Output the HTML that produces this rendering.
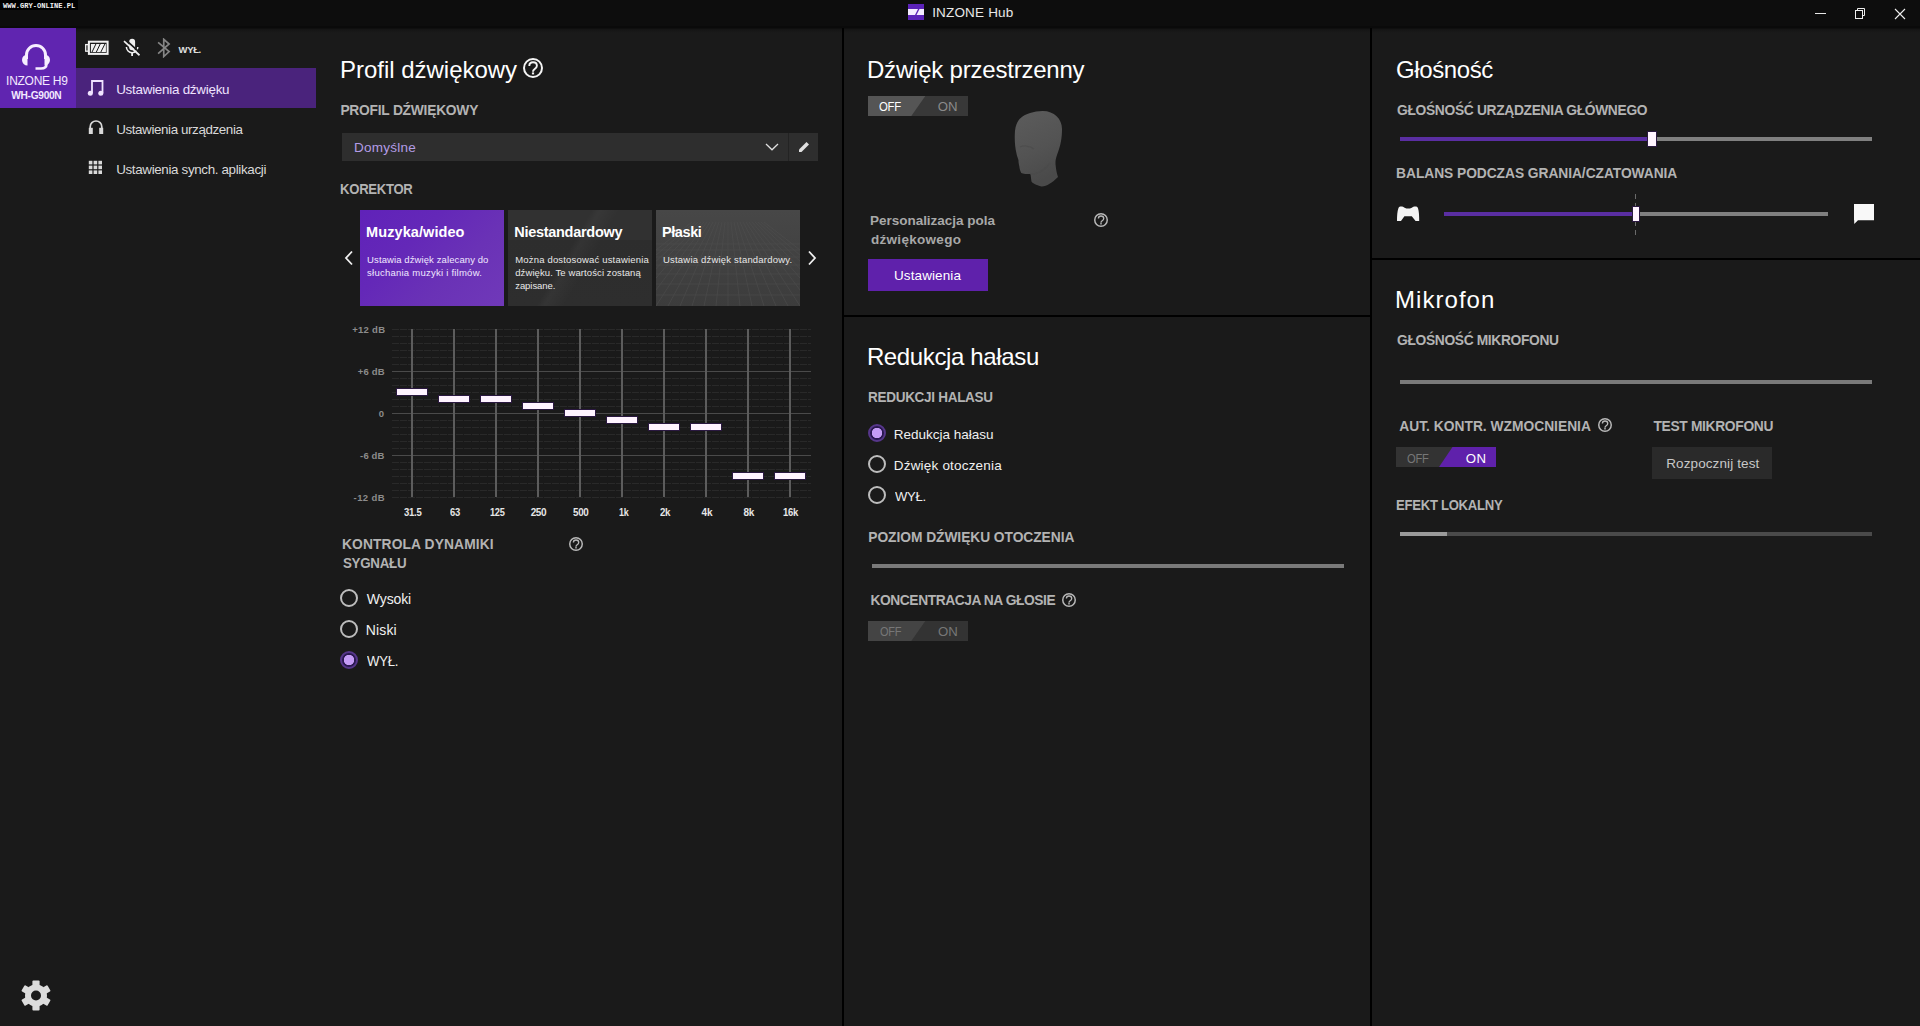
<!DOCTYPE html>
<html><head><meta charset="utf-8"><title>INZONE Hub</title>
<style>
*{box-sizing:border-box;margin:0;padding:0}
html,body{width:1920px;height:1026px;overflow:hidden;background:#1a1a1a;font-family:"Liberation Sans",sans-serif}
.a{position:absolute}
.t{position:absolute;line-height:1;white-space:nowrap}

.sep{position:absolute;background:#000}
.help{position:absolute;border-radius:50%;border:1.5px solid #ddd}
.radio{position:absolute;width:18px;height:18px;border-radius:50%;border:2px solid #bdbdbd}
.radio.on{border:2px solid #56368a;background:radial-gradient(circle at 50% 50%,#c59cf6 0,#c59cf6 4.9px,#2a1850 5.5px)}
.tog{position:absolute;width:100px;height:20px;overflow:hidden}
.grid-h{position:absolute;left:392px;width:419px;height:1px}
.dot{background:repeating-linear-gradient(90deg,#292929 0 7px,transparent 7px 8px)}
.sol{background:#4a4a4a}
.vs{position:absolute;width:2px;top:329px;height:168px;background:#5c5c5c}
.th{position:absolute;width:30px;height:6px;background:#fff4ff;box-shadow:0 0 0 1px #2a1840}

</style></head><body>
<div class="a" style="left:0;top:0;width:1920px;height:28px;background:#0d0d0d"></div>
<div class="a" style="left:0;top:26px;width:1920px;height:7px;background:linear-gradient(180deg,#0a0a0a 0,#0a0a0a 2px,#141414 3px,#1a1a1a 7px)"></div>
<div class="a" style="left:0;top:0;width:78px;height:10px;background:#000"></div>
<div class="t" style="left:3px;top:3px;font-family:'Liberation Mono',monospace;font-size:7.1px;font-weight:700;color:#f0f0f0">WWW.GRY-ONLINE.PL</div>
<svg class="a" style="left:908px;top:4px" width="16" height="16" viewBox="0 0 16 16"><rect x="0" y="0" width="16" height="16" fill="#5b22b8"/><rect x="0" y="5" width="16" height="6" fill="#f4ecff"/><path d="M7 11 L10 5 L11.5 5 L8.5 11Z" fill="#5b22b8"/></svg>
<div class="a" style="left:1815px;top:13px;width:11px;height:1px;background:#e8e8e8"></div>
<svg class="a" style="left:1854px;top:8px" width="12" height="12" viewBox="0 0 12 12"><path d="M3.5 2.5 V0.5 H10.5 V7.5 H8.5" fill="none" stroke="#eee" stroke-width="1"/><rect x="1.5" y="2.5" width="7" height="8" fill="none" stroke="#eee" stroke-width="1"/></svg>
<svg class="a" style="left:1894px;top:8px" width="12" height="12" viewBox="0 0 12 12"><path d="M1 1 L11 11 M11 1 L1 11" stroke="#eee" stroke-width="1.1"/></svg>
<div class="sep" style="left:842px;top:28px;width:2px;height:998px"></div>
<div class="sep" style="left:1370px;top:28px;width:2px;height:998px"></div>
<div class="sep" style="left:844px;top:315px;width:526px;height:2px"></div>
<div class="sep" style="left:1372px;top:258px;width:548px;height:2px"></div>
<div class="a" style="left:0;top:28px;width:76px;height:80px;background:#6025b0"></div>
<svg class="a" style="left:21px;top:43px" width="30" height="28" viewBox="0 0 30 28"><path d="M5.5 16 V12 A9.5 9.5 0 0 1 24.5 12 V16" fill="none" stroke="#f6eeff" stroke-width="3"/><path d="M6.5 11.5 A5.5 5.5 0 0 0 6.5 22.5 Z" fill="#f6eeff"/><path d="M23.5 11.5 A5.5 5.5 0 0 1 23.5 22.5 Z" fill="#f6eeff"/><path d="M25.5 21 Q25.5 25.5 20 25.5 H14.5" fill="none" stroke="#f6eeff" stroke-width="2.6"/></svg>
<div class="a" style="left:76px;top:68px;width:240px;height:40px;background:#4a237c"></div>
<svg class="a" style="left:84px;top:38px" width="26" height="20" viewBox="0 0 26 20"><rect x="4.9" y="3.7" width="18.7" height="12.2" fill="none" stroke="#f2f2f2" stroke-width="2"/><rect x="1.7" y="6.6" width="2.6" height="6.6" fill="none" stroke="#f2f2f2" stroke-width="1.3"/><rect x="6.9" y="6" width="15" height="8.1" fill="#f2f2f2"/><path d="M8 14.1 L11.9 6 M12.3 14.1 L16.2 6 M16.8 14.1 L20.9 6" stroke="#1a1a1a" stroke-width="1"/></svg>
<svg class="a" style="left:122px;top:36px" width="20" height="22" viewBox="0 0 20 22"><rect x="7.2" y="2.7" width="5.9" height="11.5" rx="2.95" fill="#f0f0f0"/><path d="M4.4 11 A5.7 5.7 0 0 0 15.8 11" fill="none" stroke="#f0f0f0" stroke-width="1.5"/><path d="M10.1 16.5 V20" stroke="#f0f0f0" stroke-width="1.8"/><path d="M3.4 3.6 L18.9 17.6" stroke="#1a1a1a" stroke-width="1.8"/><path d="M2 5.2 L17.5 19.25" stroke="#f0f0f0" stroke-width="1.7"/></svg>
<svg class="a" style="left:157px;top:38px" width="14" height="20" viewBox="0 0 14 20"><path d="M1.1 4.4 L12.1 13.5 L6.75 18.5 V1.3 L12.1 6 L1.1 15.7" fill="none" stroke="#858585" stroke-width="1.7"/></svg>
<svg class="a" style="left:87px;top:79px" width="18" height="18" viewBox="0 0 18 18"><path d="M5 14 V2 H15.5 V14" fill="none" stroke="#f0e4ff" stroke-width="1.8"/><circle cx="3.3" cy="14.2" r="2.5" fill="#f0e4ff"/><circle cx="13.8" cy="14.2" r="2.5" fill="#f0e4ff"/></svg>
<svg class="a" style="left:88px;top:119px" width="16" height="16" viewBox="0 0 16 16"><path d="M2.2 12 V7.8 A5.8 5.8 0 0 1 13.8 7.8 V12" fill="none" stroke="#d9d9d9" stroke-width="1.7"/><rect x="0.8" y="8.8" width="4" height="6.2" fill="#d9d9d9"/><rect x="11.2" y="8.8" width="4" height="6.2" fill="#d9d9d9"/></svg>
<svg class="a" style="left:88px;top:160px" width="15" height="15" viewBox="0 0 15 15"><rect x="0.8" y="0.8" width="3.6" height="3.6" fill="#d9d9d9"/><rect x="0.8" y="5.6" width="3.6" height="3.6" fill="#d9d9d9"/><rect x="0.8" y="10.4" width="3.6" height="3.6" fill="#d9d9d9"/><rect x="5.6" y="0.8" width="3.6" height="3.6" fill="#d9d9d9"/><rect x="5.6" y="5.6" width="3.6" height="3.6" fill="#d9d9d9"/><rect x="5.6" y="10.4" width="3.6" height="3.6" fill="#d9d9d9"/><rect x="10.4" y="0.8" width="3.6" height="3.6" fill="#d9d9d9"/><rect x="10.4" y="5.6" width="3.6" height="3.6" fill="#d9d9d9"/><rect x="10.4" y="10.4" width="3.6" height="3.6" fill="#d9d9d9"/></svg>
<svg class="a" style="left:523px;top:58px" width="20" height="20" viewBox="0 0 20 20"><circle cx="10.0" cy="10.0" r="9.0" fill="none" stroke="#f4f4f4" stroke-width="2.0"/><path d="M6.30 8.00 C6.30 5.40 8.10 4.30 10.00 4.30 C12.20 4.30 13.90 5.70 13.90 7.70 C13.90 9.70 12.30 10.60 11.20 11.50 C10.30 12.20 10.00 12.80 10.00 13.80" fill="none" stroke="#f4f4f4" stroke-width="1.90"/><rect x="8.90" y="14.40" width="2.20" height="2.00" fill="#f4f4f4"/></svg>
<div class="a" style="left:342px;top:133px;width:476px;height:28px;background:#2e2e2e"></div>
<div class="a" style="left:788px;top:133px;width:1px;height:28px;background:#232323"></div>
<svg class="a" style="left:764px;top:141px" width="16" height="11" viewBox="0 0 16 11"><path d="M2 3 L8 8.8 L14 3" fill="none" stroke="#e0e0e0" stroke-width="1.3"/></svg>
<svg class="a" style="left:797px;top:140px" width="14" height="14" viewBox="0 0 14 14"><path d="M2 9.5 L9.5 2 L12 4.5 L4.5 12 H2Z" fill="#e0e0e0"/></svg>
<div class="a" style="left:360px;top:210px;width:144px;height:96px;background:linear-gradient(135deg,#6022b9 0%,#6428b8 35%,#6a32b6 65%,#7039b9 100%)"></div>
<div class="a" style="left:508px;top:210px;width:144px;height:96px;background:linear-gradient(180deg,#313131 0,#313131 31%,#2d2d2d 31%,#2e2e2e 100%)"></div>
<div class="a" style="left:508px;top:210px;width:144px;height:96px;background:linear-gradient(120deg,transparent 0%,transparent 42%,rgba(255,255,255,0.03) 46%,transparent 56%)"></div>
<svg class="a" style="left:656px;top:210px" width="144" height="96" viewBox="0 0 144 96"><defs><linearGradient id="c3" x1="0" y1="0" x2="0" y2="1"><stop offset="0" stop-color="#474747"/><stop offset="1" stop-color="#3c3c3c"/></linearGradient></defs><rect width="144" height="96" fill="url(#c3)"/><g stroke="#515151" stroke-width="0.9" opacity="0.55"><path d="M36 12 L-72 96"/><path d="M39 12 L-60 96"/><path d="M42 12 L-48 96"/><path d="M45 12 L-36 96"/><path d="M48 12 L-24 96"/><path d="M51 12 L-12 96"/><path d="M54 12 L0 96"/><path d="M57 12 L12 96"/><path d="M60 12 L24 96"/><path d="M63 12 L36 96"/><path d="M66 12 L48 96"/><path d="M69 12 L60 96"/><path d="M72 12 L72 96"/><path d="M75 12 L84 96"/><path d="M78 12 L96 96"/><path d="M81 12 L108 96"/><path d="M84 12 L120 96"/><path d="M87 12 L132 96"/><path d="M90 12 L144 96"/><path d="M93 12 L156 96"/><path d="M96 12 L168 96"/><path d="M99 12 L180 96"/><path d="M102 12 L192 96"/><path d="M105 12 L204 96"/><path d="M108 12 L216 96"/><path d="M0 34 H144"/><path d="M0 40 H144"/><path d="M0 47 H144"/><path d="M0 55 H144"/><path d="M0 64 H144"/><path d="M0 74 H144"/><path d="M0 85 H144"/></g></svg>
<svg class="a" style="left:343px;top:250px" width="12" height="16" viewBox="0 0 12 16"><path d="M9 1.5 L3 8 L9 14.5" fill="none" stroke="#f0f0f0" stroke-width="1.8"/></svg>
<svg class="a" style="left:806px;top:250px" width="12" height="16" viewBox="0 0 12 16"><path d="M3 1.5 L9 8 L3 14.5" fill="none" stroke="#f0f0f0" stroke-width="1.8"/></svg>
<div class="grid-h dot" style="top:329px"></div>
<div class="grid-h dot" style="top:336px"></div>
<div class="grid-h dot" style="top:343px"></div>
<div class="grid-h dot" style="top:350px"></div>
<div class="grid-h dot" style="top:357px"></div>
<div class="grid-h dot" style="top:364px"></div>
<div class="grid-h sol" style="top:371px"></div>
<div class="grid-h dot" style="top:378px"></div>
<div class="grid-h dot" style="top:385px"></div>
<div class="grid-h dot" style="top:392px"></div>
<div class="grid-h dot" style="top:399px"></div>
<div class="grid-h dot" style="top:406px"></div>
<div class="grid-h sol" style="top:413px"></div>
<div class="grid-h dot" style="top:420px"></div>
<div class="grid-h dot" style="top:427px"></div>
<div class="grid-h dot" style="top:434px"></div>
<div class="grid-h dot" style="top:441px"></div>
<div class="grid-h dot" style="top:448px"></div>
<div class="grid-h sol" style="top:455px"></div>
<div class="grid-h dot" style="top:462px"></div>
<div class="grid-h dot" style="top:469px"></div>
<div class="grid-h dot" style="top:476px"></div>
<div class="grid-h dot" style="top:483px"></div>
<div class="grid-h dot" style="top:490px"></div>
<div class="grid-h dot" style="top:497px"></div>
<div class="vs" style="left:411px"></div>
<div class="vs" style="left:453px"></div>
<div class="vs" style="left:495px"></div>
<div class="vs" style="left:537px"></div>
<div class="vs" style="left:579px"></div>
<div class="vs" style="left:621px"></div>
<div class="vs" style="left:663px"></div>
<div class="vs" style="left:705px"></div>
<div class="vs" style="left:747px"></div>
<div class="vs" style="left:789px"></div>
<div class="th" style="left:397px;top:389px"></div>
<div class="th" style="left:439px;top:396px"></div>
<div class="th" style="left:481px;top:396px"></div>
<div class="th" style="left:523px;top:403px"></div>
<div class="th" style="left:565px;top:410px"></div>
<div class="th" style="left:607px;top:417px"></div>
<div class="th" style="left:649px;top:424px"></div>
<div class="th" style="left:691px;top:424px"></div>
<div class="th" style="left:733px;top:473px"></div>
<div class="th" style="left:775px;top:473px"></div>
<svg class="a" style="left:569px;top:537px" width="14" height="14" viewBox="0 0 14 14"><circle cx="7.0" cy="7.0" r="6.25" fill="none" stroke="#b8b8b8" stroke-width="1.5"/><path d="M4.41 5.60 C4.41 3.78 5.67 3.01 7.00 3.01 C8.54 3.01 9.73 3.99 9.73 5.39 C9.73 6.79 8.61 7.42 7.84 8.05 C7.21 8.54 7.00 8.96 7.00 9.66" fill="none" stroke="#b8b8b8" stroke-width="1.33"/><rect x="6.23" y="10.08" width="1.54" height="1.40" fill="#b8b8b8"/></svg>
<div class="radio" style="left:340px;top:589px"></div>
<div class="radio" style="left:340px;top:620px"></div>
<div class="radio on" style="left:340px;top:651px"></div>
<svg class="a" style="left:868px;top:96px" width="100" height="20" viewBox="0 0 100 20"><rect width="100" height="20" fill="#383838"/><path d="M0 0 H57.3 L43.3 20 H0Z" fill="#555555"/></svg>
<svg class="a" style="left:1010px;top:105px" width="56" height="86" viewBox="0 0 56 86"><defs><linearGradient id="hg" x1="0" y1="0" x2="0.3" y2="1"><stop offset="0" stop-color="#5c5c5c"/><stop offset="0.6" stop-color="#535353"/><stop offset="1" stop-color="#4a4a4a"/></linearGradient></defs><path d="M32.6 6.1 C44 6 52 14 52 24 C52 32 51 40 47 50 C45.5 54 45.3 57 45.6 60 C46 65 47 69 48 72 C42 78 37 81 31.7 81.6 C26 80 22 78 21.5 76.5 C21 73 20.6 70 20.6 69 C17 69 13 69 11.3 68 C10 65.5 9.5 63 9.4 61.7 C8.5 58 8.5 56 8.5 55.2 C7.5 52 6.7 50 6.5 48.5 C5 42 4.6 36 4.8 30 C4.8 22 7 16 11.3 12.6 C15 9 24 6.2 32.6 6.1 Z" fill="url(#hg)"/><path d="M10 42 C14 40 20 41 24 44" fill="none" stroke="#4a4a4a" stroke-width="1.2" opacity="0.6"/><path d="M20 69 C26 70 34 66 40 58" fill="none" stroke="#4a4a4a" stroke-width="1.5" opacity="0.5"/></svg>
<svg class="a" style="left:1094px;top:213px" width="14" height="14" viewBox="0 0 14 14"><circle cx="7.0" cy="7.0" r="6.25" fill="none" stroke="#b8b8b8" stroke-width="1.5"/><path d="M4.41 5.60 C4.41 3.78 5.67 3.01 7.00 3.01 C8.54 3.01 9.73 3.99 9.73 5.39 C9.73 6.79 8.61 7.42 7.84 8.05 C7.21 8.54 7.00 8.96 7.00 9.66" fill="none" stroke="#b8b8b8" stroke-width="1.33"/><rect x="6.23" y="10.08" width="1.54" height="1.40" fill="#b8b8b8"/></svg>
<div class="a" style="left:868px;top:259px;width:120px;height:32px;background:#5f21ab"></div>
<div class="radio on" style="left:868px;top:424px"></div>
<div class="radio" style="left:868px;top:455px"></div>
<div class="radio" style="left:868px;top:486px"></div>
<div class="a" style="left:872px;top:564px;width:472px;height:4px;background:#7a7a7a"></div>
<svg class="a" style="left:1062px;top:593px" width="14" height="14" viewBox="0 0 14 14"><circle cx="7.0" cy="7.0" r="6.25" fill="none" stroke="#b8b8b8" stroke-width="1.5"/><path d="M4.41 5.60 C4.41 3.78 5.67 3.01 7.00 3.01 C8.54 3.01 9.73 3.99 9.73 5.39 C9.73 6.79 8.61 7.42 7.84 8.05 C7.21 8.54 7.00 8.96 7.00 9.66" fill="none" stroke="#b8b8b8" stroke-width="1.33"/><rect x="6.23" y="10.08" width="1.54" height="1.40" fill="#b8b8b8"/></svg>
<svg class="a" style="left:868px;top:621px" width="100" height="20" viewBox="0 0 100 20"><rect width="100" height="20" fill="#333333"/><path d="M0 0 H57.3 L43.3 20 H0Z" fill="#444444"/></svg>
<div class="a" style="left:1400px;top:137px;width:472px;height:4px;background:#808080"></div>
<div class="a" style="left:1400px;top:137px;width:250px;height:4px;background:#5a2ea2"></div>
<div class="a" style="left:1648px;top:132px;width:8px;height:14px;background:#fff4ff;box-shadow:0 0 0 1px #2a1840"></div>
<svg class="a" style="left:1396px;top:205px" width="25" height="18" viewBox="0 0 25 18"><path d="M1 16 C1 11 1.3 6 2.4 3.2 C3 1.8 4 1.6 5 1.6 C6.5 1.6 7.6 2 8.6 2.8 C9.8 3.5 11 3.6 12.2 3.6 C13.4 3.6 14.6 3.5 15.8 2.8 C16.8 2 17.9 1.6 19.4 1.6 C20.4 1.6 21.4 1.8 22 3.2 C23 6 23.2 11 23.2 16 H19.6 L15.8 11.2 H8.4 L5 16 Z" fill="#f4f4f4"/></svg>
<div class="a" style="left:1444px;top:212px;width:384px;height:4px;background:#808080"></div>
<div class="a" style="left:1444px;top:212px;width:190px;height:4px;background:#5a2ea2"></div>
<div class="a" style="left:1635px;top:194px;width:1px;height:41px;background:repeating-linear-gradient(180deg,#6a6a6a 0 5px,transparent 5px 9px)"></div>
<div class="a" style="left:1633px;top:207px;width:6px;height:14px;background:#fff4ff;box-shadow:0 0 0 1px #2a1840"></div>
<svg class="a" style="left:1853px;top:203px" width="22" height="21" viewBox="0 0 22 21"><path d="M1 1 H21 V17.3 H5 L1.2 21 V17.3 H1Z" fill="#f8f8f8"/></svg>
<div class="a" style="left:1400px;top:380px;width:472px;height:4px;background:#7a7a7a"></div>
<svg class="a" style="left:1598px;top:418px" width="14" height="14" viewBox="0 0 14 14"><circle cx="7.0" cy="7.0" r="6.25" fill="none" stroke="#b8b8b8" stroke-width="1.5"/><path d="M4.41 5.60 C4.41 3.78 5.67 3.01 7.00 3.01 C8.54 3.01 9.73 3.99 9.73 5.39 C9.73 6.79 8.61 7.42 7.84 8.05 C7.21 8.54 7.00 8.96 7.00 9.66" fill="none" stroke="#b8b8b8" stroke-width="1.33"/><rect x="6.23" y="10.08" width="1.54" height="1.40" fill="#b8b8b8"/></svg>
<svg class="a" style="left:1396px;top:447px" width="100" height="20" viewBox="0 0 100 20"><rect width="100" height="20" fill="#333333"/><path d="M56.5 0 H100 V20 H43Z" fill="#5f21ab"/></svg>
<div class="a" style="left:1652px;top:447px;width:120px;height:32px;background:#2a2a2a"></div>
<div class="a" style="left:1400px;top:532px;width:472px;height:4px;background:#4a4a4a"></div>
<div class="a" style="left:1400px;top:532px;width:47px;height:4px;background:#9a9a9a"></div>
<svg class="a" style="left:20px;top:979px" width="32" height="33" viewBox="0 0 32 33"><g transform="translate(16 16.5)" fill="#dcdcdc"><rect x="-3.6" y="-15" width="7.2" height="8" rx="1" transform="rotate(0)"/><rect x="-3.6" y="-15" width="7.2" height="8" rx="1" transform="rotate(60)"/><rect x="-3.6" y="-15" width="7.2" height="8" rx="1" transform="rotate(120)"/><rect x="-3.6" y="-15" width="7.2" height="8" rx="1" transform="rotate(180)"/><rect x="-3.6" y="-15" width="7.2" height="8" rx="1" transform="rotate(240)"/><rect x="-3.6" y="-15" width="7.2" height="8" rx="1" transform="rotate(300)"/><circle r="11"/></g><circle cx="16" cy="16.5" r="5" fill="#1b1b1b"/></svg>
<div class="t" style="left:932.2px;top:6.0px;font-size:13.5px;color:#e8e8e8;letter-spacing:0.17px">INZONE Hub</div>
<div class="t" style="left:6.1px;top:73.8px;font-size:13.2px;color:#f3e9ff;letter-spacing:-0.30px;transform:scaleX(0.9099);transform-origin:1px 0">INZONE H9</div>
<div class="t" style="left:11.2px;top:91.1px;font-size:10.2px;color:#f3e9ff;font-weight:700;letter-spacing:-0.30px">WH-G900N</div>
<div class="t" style="left:178.6px;top:44.7px;font-size:9.5px;color:#e0e0e0;font-weight:700;letter-spacing:-0.37px">WYŁ.</div>
<div class="t" style="left:116.2px;top:83.2px;font-size:13.4px;color:#efe3ff;letter-spacing:-0.25px">Ustawienia dźwięku</div>
<div class="t" style="left:116.2px;top:123.2px;font-size:13.4px;color:#d9d9d9;letter-spacing:-0.40px">Ustawienia urządzenia</div>
<div class="t" style="left:116.2px;top:163.2px;font-size:13.4px;color:#d9d9d9;letter-spacing:-0.35px">Ustawienia synch. aplikacji</div>
<div class="t" style="left:340.0px;top:58.1px;font-size:24px;color:#ffffff;letter-spacing:-0.02px">Profil dźwiękowy</div>
<div class="t" style="left:340.4px;top:103.8px;font-size:13.8px;color:#b3b3b3;font-weight:700;letter-spacing:-0.24px">PROFIL DŹWIĘKOWY</div>
<div class="t" style="left:354.0px;top:140.9px;font-size:13.5px;color:#b39ce6;letter-spacing:0.24px">Domyślne</div>
<div class="t" style="left:340.4px;top:183.0px;font-size:13.8px;color:#b3b3b3;font-weight:700;letter-spacing:-0.30px;transform:scaleX(0.9499);transform-origin:1px 0">KOREKTOR</div>
<div class="t" style="left:366.1px;top:224.8px;font-size:14.5px;color:#ffffff;font-weight:700;letter-spacing:0.08px">Muzyka/wideo</div>
<div class="t" style="left:514.2px;top:224.8px;font-size:14.5px;color:#ffffff;font-weight:700;letter-spacing:-0.28px">Niestandardowy</div>
<div class="t" style="left:662.0px;top:224.8px;font-size:14.5px;color:#ffffff;font-weight:700;letter-spacing:-0.42px">Płaski</div>
<div class="t" style="left:367.1px;top:254.6px;font-size:9.5px;color:#f0e8ff;letter-spacing:0.10px">Ustawia dźwięk zalecany do</div>
<div class="t" style="left:367.1px;top:267.5px;font-size:9.5px;color:#f0e8ff;letter-spacing:0.24px">słuchania muzyki i filmów.</div>
<div class="t" style="left:515.2px;top:254.6px;font-size:9.5px;color:#e8e8e8;letter-spacing:0.18px">Można dostosować ustawienia</div>
<div class="t" style="left:515.2px;top:267.5px;font-size:9.5px;color:#e8e8e8;letter-spacing:0.10px">dźwięku. Te wartości zostaną</div>
<div class="t" style="left:515.2px;top:280.5px;font-size:9.5px;color:#e8e8e8;letter-spacing:-0.05px">zapisane.</div>
<div class="t" style="left:663.0px;top:254.6px;font-size:9.5px;color:#e8e8e8;letter-spacing:0.20px">Ustawia dźwięk standardowy.</div>
<div class="t" style="left:352.2px;top:324.9px;font-size:9.5px;color:#8c8c8c;font-weight:700;letter-spacing:0.28px">+12 dB</div>
<div class="t" style="left:357.7px;top:367.0px;font-size:9.5px;color:#8c8c8c;font-weight:700;letter-spacing:0.22px">+6 dB</div>
<div class="t" style="left:378.7px;top:409.0px;font-size:9.5px;color:#8c8c8c;font-weight:700">0</div>
<div class="t" style="left:360.1px;top:451.0px;font-size:9.5px;color:#8c8c8c;font-weight:700;letter-spacing:0.12px">-6 dB</div>
<div class="t" style="left:353.6px;top:493.0px;font-size:9.5px;color:#8c8c8c;font-weight:700;letter-spacing:0.40px">-12 dB</div>
<div class="t" style="left:403.6px;top:507.7px;font-size:10px;color:#e6e6e6;font-weight:700;letter-spacing:-0.30px;transform:scaleX(0.9529);transform-origin:0px 0">31.5</div>
<div class="t" style="left:450.0px;top:507.7px;font-size:10px;color:#e6e6e6;font-weight:700;letter-spacing:-0.30px;transform:scaleX(0.9439);transform-origin:0px 0">63</div>
<div class="t" style="left:489.6px;top:507.7px;font-size:10px;color:#e6e6e6;font-weight:700;letter-spacing:-0.30px;transform:scaleX(0.9207);transform-origin:0px 0">125</div>
<div class="t" style="left:530.7px;top:507.7px;font-size:10px;color:#e6e6e6;font-weight:700;letter-spacing:-0.45px">250</div>
<div class="t" style="left:572.9px;top:507.7px;font-size:10px;color:#e6e6e6;font-weight:700;letter-spacing:-0.30px;transform:scaleX(0.9817);transform-origin:0px 0">500</div>
<div class="t" style="left:618.5px;top:507.7px;font-size:10px;color:#e6e6e6;font-weight:700;letter-spacing:-0.30px;transform:scaleX(0.8972);transform-origin:0px 0">1k</div>
<div class="t" style="left:659.6px;top:507.7px;font-size:10px;color:#e6e6e6;font-weight:700;letter-spacing:-0.30px;transform:scaleX(0.9720);transform-origin:0px 0">2k</div>
<div class="t" style="left:701.5px;top:507.7px;font-size:10px;color:#e6e6e6;font-weight:700">4k</div>
<div class="t" style="left:743.5px;top:507.7px;font-size:10px;color:#e6e6e6;font-weight:700;letter-spacing:-0.40px">8k</div>
<div class="t" style="left:783.3px;top:507.7px;font-size:10px;color:#e6e6e6;font-weight:700;letter-spacing:-0.30px;transform:scaleX(0.9512);transform-origin:0px 0">16k</div>
<div class="t" style="left:342.0px;top:538.0px;font-size:13.8px;color:#b3b3b3;font-weight:700;letter-spacing:0.12px">KONTROLA DYNAMIKI</div>
<div class="t" style="left:343.0px;top:556.9px;font-size:13.8px;color:#b3b3b3;font-weight:700;letter-spacing:-0.30px;transform:scaleX(0.9678);transform-origin:0px 0">SYGNAŁU</div>
<div class="t" style="left:366.8px;top:592.2px;font-size:14px;color:#f0f0f0;letter-spacing:-0.12px">Wysoki</div>
<div class="t" style="left:365.8px;top:623.0px;font-size:14px;color:#f0f0f0;letter-spacing:0.12px">Niski</div>
<div class="t" style="left:366.8px;top:654.0px;font-size:14px;color:#f0f0f0;letter-spacing:-0.30px;transform:scaleX(0.9408);transform-origin:0px 0">WYŁ.</div>
<div class="t" style="left:867.0px;top:58.2px;font-size:24px;color:#ffffff;letter-spacing:-0.21px">Dźwięk przestrzenny</div>
<div class="t" style="left:878.7px;top:101.0px;font-size:12.5px;color:#ffffff;letter-spacing:-0.30px;transform:scaleX(0.9098);transform-origin:0px 0">OFF</div>
<div class="t" style="left:937.7px;top:100.0px;font-size:13.2px;color:#8a8a8a">ON</div>
<div class="t" style="left:870.0px;top:214.2px;font-size:13.5px;color:#a8a8a8;font-weight:700;letter-spacing:-0.02px">Personalizacja pola</div>
<div class="t" style="left:871.0px;top:232.6px;font-size:13.5px;color:#a8a8a8;font-weight:700;letter-spacing:0.29px">dźwiękowego</div>
<div class="t" style="left:894.0px;top:269.3px;font-size:13.5px;color:#ffffff;letter-spacing:0.10px">Ustawienia</div>
<div class="t" style="left:866.9px;top:345.4px;font-size:24px;color:#ffffff;letter-spacing:-0.36px">Redukcja hałasu</div>
<div class="t" style="left:867.9px;top:390.6px;font-size:13.8px;color:#b3b3b3;font-weight:700;letter-spacing:-0.30px;transform:scaleX(0.9795);transform-origin:1px 0">REDUKCJI HALASU</div>
<div class="t" style="left:893.8px;top:428.3px;font-size:13.5px;color:#f0f0f0">Redukcja hałasu</div>
<div class="t" style="left:893.8px;top:459.3px;font-size:13.5px;color:#f0f0f0;letter-spacing:0.19px">Dźwięk otoczenia</div>
<div class="t" style="left:894.8px;top:490.3px;font-size:13.5px;color:#f0f0f0;letter-spacing:-0.30px;transform:scaleX(0.9711);transform-origin:0px 0">WYŁ.</div>
<div class="t" style="left:868.3px;top:530.9px;font-size:13.8px;color:#b3b3b3;font-weight:700;letter-spacing:-0.06px">POZIOM DŹWIĘKU OTOCZENIA</div>
<div class="t" style="left:870.5px;top:593.8px;font-size:13.8px;color:#b3b3b3;font-weight:700;letter-spacing:-0.44px">KONCENTRACJA NA GŁOSIE</div>
<div class="t" style="left:879.5px;top:625.6px;font-size:12.5px;color:#777777;letter-spacing:-0.30px;transform:scaleX(0.8811);transform-origin:0px 0">OFF</div>
<div class="t" style="left:938.0px;top:624.6px;font-size:13.2px;color:#777777">ON</div>
<div class="t" style="left:1396.1px;top:57.8px;font-size:24px;color:#ffffff;letter-spacing:-0.40px">Głośność</div>
<div class="t" style="left:1397.1px;top:104.0px;font-size:13.8px;color:#b3b3b3;font-weight:700;letter-spacing:-0.33px">GŁOŚNOŚĆ URZĄDZENIA GŁÓWNEGO</div>
<div class="t" style="left:1396.1px;top:167.4px;font-size:13.8px;color:#b3b3b3;font-weight:700;letter-spacing:-0.06px">BALANS PODCZAS GRANIA/CZATOWANIA</div>
<div class="t" style="left:1395.1px;top:287.8px;font-size:24px;color:#ffffff;letter-spacing:1.03px">Mikrofon</div>
<div class="t" style="left:1397.1px;top:334.0px;font-size:13.8px;color:#b3b3b3;font-weight:700;letter-spacing:-0.35px">GŁOŚNOŚĆ MIKROFONU</div>
<div class="t" style="left:1399.3px;top:420.3px;font-size:13.8px;color:#b3b3b3;font-weight:700">AUT. KONTR. WZMOCNIENIA</div>
<div class="t" style="left:1653.4px;top:420.3px;font-size:13.8px;color:#b3b3b3;font-weight:700;letter-spacing:-0.32px">TEST MIKROFONU</div>
<div class="t" style="left:1407.1px;top:453.0px;font-size:12.5px;color:#777777;letter-spacing:-0.30px;transform:scaleX(0.8934);transform-origin:0px 0">OFF</div>
<div class="t" style="left:1465.8px;top:452.0px;font-size:13.2px;color:#ffffff;letter-spacing:0.50px">ON</div>
<div class="t" style="left:1666.2px;top:456.8px;font-size:13.5px;color:#c8c8c8;letter-spacing:0.11px">Rozpocznij test</div>
<div class="t" style="left:1396.1px;top:499.0px;font-size:13.8px;color:#b3b3b3;font-weight:700;letter-spacing:-0.30px;transform:scaleX(0.9506);transform-origin:1px 0">EFEKT LOKALNY</div>
</body></html>
